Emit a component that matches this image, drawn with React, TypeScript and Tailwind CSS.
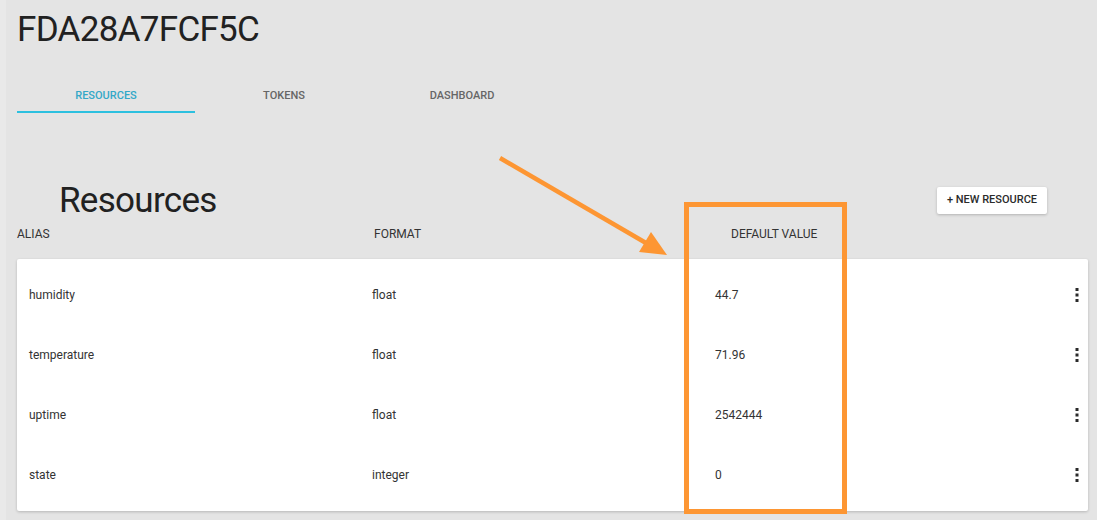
type Resource = {
  alias: string;
  format: string;
  value: string;
};

const resources: Resource[] = [
  { alias: "humidity", format: "float", value: "44.7" },
  { alias: "temperature", format: "float", value: "71.96" },
  { alias: "uptime", format: "float", value: "2542444" },
  { alias: "state", format: "integer", value: "0" },
];

const tabs = ["RESOURCES", "TOKENS", "DASHBOARD"];

function Kebab() {
  return (
    <svg width="4" height="14" viewBox="0 0 4 14" className="text-[#2a2a2a]">
      <rect x="0.5" y="0" width="3" height="3" fill="currentColor" />
      <rect x="0.5" y="5.5" width="3" height="3" fill="currentColor" />
      <rect x="0.5" y="11" width="3" height="3" fill="currentColor" />
    </svg>
  );
}

export default function App() {
  return (
    <main className="relative h-[520px] w-[1097px] overflow-hidden border-l-[6px] border-[#e9e9e9] bg-[#e4e4e4] font-['Roboto',sans-serif] text-[#2b2b2b]">
      <div className="pl-[11px] pr-[9px]">
        {/* HEADER */}
        <h1 className="pt-[9px] text-[35px] leading-[42px] font-normal tracking-[-0.7px] text-[#212121]">
          FDA28A7FCF5C
        </h1>

        {/* TABS */}
        <nav className="mt-[38px] flex">
          {tabs.map((tab, i) => (
            <div
              key={tab}
              className={
                i === 0
                  ? "w-[178px] border-b-2 border-[#2cc0df] pb-[8px] text-center text-[11px] leading-[14px] font-medium text-[#33a8c8]"
                  : "w-[178px] border-b-2 border-transparent pb-[8px] text-center text-[11px] leading-[14px] font-medium text-[#666666]"
              }
            >
              {tab}
            </div>
          ))}
        </nav>

        {/* TITLE + BUTTON */}
        <div className="mt-[67px] flex items-start justify-between">
          <h2 className="ml-[42px] text-[35px] leading-[42px] font-normal tracking-[-0.7px] text-[#212121]">
            Resources
          </h2>
          <button className="mr-[41px] mt-[7px] h-[27px] w-[110px] rounded-[2px] bg-white text-[11px] font-medium text-[#2b2b2b] shadow-[0_1px_3px_rgba(0,0,0,0.22)]">
            + NEW RESOURCE
          </button>
        </div>

        {/* COLUMN HEADERS */}
        <div className="mt-[5px] grid grid-cols-3 text-[12px] leading-[14px] text-[#333333]">
          <span>ALIAS</span>
          <span>FORMAT</span>
          <span>DEFAULT VALUE</span>
        </div>

        {/* TABLE */}
        <div className="mt-[18px] rounded-[2px] bg-white py-[6px] shadow-[0_1px_3px_rgba(0,0,0,0.2)]">
          {resources.map((r) => (
            <div
              key={r.alias}
              className="grid h-[60px] grid-cols-[343px_343px_343px_1fr] items-center pl-[12px] text-[12px] leading-[14px] text-[#333333]"
            >
              <span>{r.alias}</span>
              <span>{r.format}</span>
              <span>{r.value}</span>
              <span className="flex justify-end pr-[9px]">
                <Kebab />
              </span>
            </div>
          ))}
        </div>
      </div>

      {/* ANNOTATION */}
      <div className="absolute left-[678px] top-[202px] h-[312px] w-[163px] border-[5px] border-[#fd9633]" />
      <svg
        className="absolute left-[-6px] top-0"
        width="1097"
        height="520"
        viewBox="0 0 1097 520"
      >
        <line x1="500" y1="158" x2="646" y2="243" stroke="#fd9633" strokeWidth="4.5" />
        <polygon points="667,255 639,252 651,232" fill="#fd9633" />
      </svg>
    </main>
  );
}
